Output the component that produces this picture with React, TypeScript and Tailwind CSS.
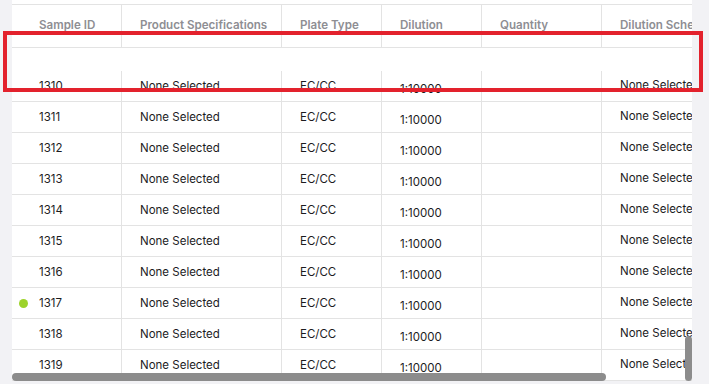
import React from 'react';

const columns = ['Sample ID', 'Product Specifications', 'Plate Type', 'Dilution', 'Quantity', 'Dilution Scheme'];

const rows = [
  { id: '1310' },
  { id: '1311' },
  { id: '1312' },
  { id: '1313' },
  { id: '1314' },
  { id: '1315' },
  { id: '1316' },
  { id: '1317', active: true },
  { id: '1318' },
  { id: '1319' },
];

const grid = 'grid grid-cols-[109px_160px_100px_100px_120px_140px]';

export default function App() {
  return (
    <div
      className="relative w-[709px] h-[384px] overflow-hidden bg-[#f2f2f5]"
      style={{ fontFamily: 'Inter, "Noto Sans", sans-serif' }}
    >
      <div className="ml-[12px] w-[680px] h-[381px] bg-white overflow-hidden pt-[4px]">
        {/* Header */}
        <div className={`${grid} h-[44px] border-y border-[#e3e3e3] text-[11.6px] font-semibold text-[#8e8e93]`}>
          {columns.map((c, i) => (
            <div
              key={c}
              className={`flex items-center whitespace-nowrap overflow-hidden ${i === 0 ? 'pl-[27px]' : 'pl-[18px] border-l border-[#e3e3e3]'}`}
            >
              {c}
            </div>
          ))}
        </div>

        {/* spacer */}
        <div className="h-[23px]" />

        {/* Body */}
        <div className="text-[11.5px] text-[#1c1c1e]">
          {rows.map((r) => (
            <div key={r.id} className={`${grid} h-[31px] border-b border-[#e3e3e3]`}>
              <div className="flex items-center pl-[7px] pt-[1px]">
                <span className="w-[20px] flex items-center">
                  {r.active && <span className="w-[9px] h-[9px] rounded-full bg-[#9dd32b]" />}
                </span>
                {r.id}
              </div>
              <div className="flex items-center pl-[18px] pt-[1px] border-l border-[#e3e3e3] whitespace-nowrap">None Selected</div>
              <div className="flex items-center pl-[18px] pt-[1px] border-l border-[#e3e3e3]">EC/CC</div>
              <div className="flex items-center pl-[18px] pt-[8px] border-l border-[#e3e3e3]">1:10000</div>
              <div className="flex items-center pl-[18px] border-l border-[#e3e3e3]" />
              <div className="flex items-center pl-[18px] pb-[1px] border-l border-[#e3e3e3] whitespace-nowrap overflow-hidden">
                None Selected
              </div>
            </div>
          ))}
        </div>
      </div>

      {/* scrollbars */}
      <div className="absolute left-[12px] top-[373px] w-[594px] h-[8px] rounded-full bg-[#8c8c8c]" />
      <div className="absolute left-[685px] top-[336px] w-[7px] h-[45px] rounded-full bg-[#8c8c8c]" />

      {/* highlight box */}
      <div className="absolute left-[3px] top-[31px] w-[700px] h-[61px] border-[4px] border-[#e3222d]" />
    </div>
  );
}
